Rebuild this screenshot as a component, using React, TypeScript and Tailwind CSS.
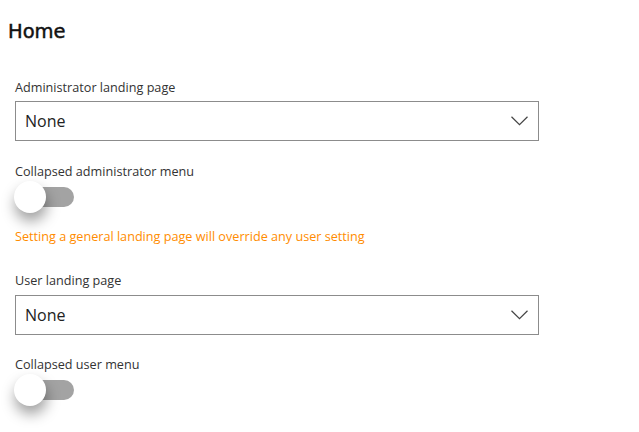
import { useState } from 'react';

const Chevron = () => (
  <svg width="17" height="10" viewBox="0 0 17 10" fill="none">
    <path d="M0.5 0.8 L8.5 8.6 L16.5 0.8" stroke="#444" strokeWidth="1.2" />
  </svg>
);

const Select = ({ value }: { value: string }) => (
  <div className="flex h-[40px] w-[524px] items-center justify-between border border-[#8c8c8c] bg-white pl-[9px] pr-[10px]">
    <span className="text-[16px] text-[#222]">{value}</span>
    <Chevron />
  </div>
);

const Toggle = ({ on, onClick }: { on: boolean; onClick: () => void }) => (
  <button onClick={onClick} className="relative flex h-[32px] w-[60px] items-center">
    {/* track */}
    <span className="ml-[1px] h-[20px] w-[58px] rounded-full bg-[#a3a3a3]" />
    {/* thumb */}
    <span
      className={
        'absolute top-0 h-[32px] w-[32px] rounded-full bg-white shadow-[1px_8px_14px_rgba(0,0,0,0.38)] ' +
        (on ? 'left-[28px]' : 'left-[-1px]')
      }
    />
  </button>
);

export default function App() {
  const [adminCollapsed, setAdminCollapsed] = useState(false);
  const [userCollapsed, setUserCollapsed] = useState(false);

  return (
    <div className="min-h-[432px] bg-white px-[8px] pt-[20px] font-['Open_Sans',sans-serif] text-[#333]">
      <h1 className="font-['DejaVu_Sans',sans-serif] text-[19.5px] font-normal leading-[24px] text-[#111] [-webkit-text-stroke:0.45px_#111]">
        Home
      </h1>

      <div className="flex flex-col items-start pl-[7px]">
        <label className="mt-[34px] text-[12.65px] leading-[18px]">Administrator landing page</label>
        <div className="mt-[5px]">
          <Select value="None" />
        </div>

        <label className="mt-[21px] text-[12.65px] leading-[18px]">Collapsed administrator menu</label>
        <div className="mt-[1px]">
          <Toggle on={adminCollapsed} onClick={() => setAdminCollapsed(!adminCollapsed)} />
        </div>

        <p className="mt-[14px] text-[12.65px] leading-[18px] text-[#ff8c00]">
          Setting a general landing page will override any user setting
        </p>

        <label className="mt-[26px] text-[12.65px] leading-[18px]">User landing page</label>
        <div className="mt-[6px]">
          <Select value="None" />
        </div>

        <label className="mt-[20px] text-[12.65px] leading-[18px]">Collapsed user menu</label>
        <div className="mt-[1px]">
          <Toggle on={userCollapsed} onClick={() => setUserCollapsed(!userCollapsed)} />
        </div>
      </div>
    </div>
  );
}
